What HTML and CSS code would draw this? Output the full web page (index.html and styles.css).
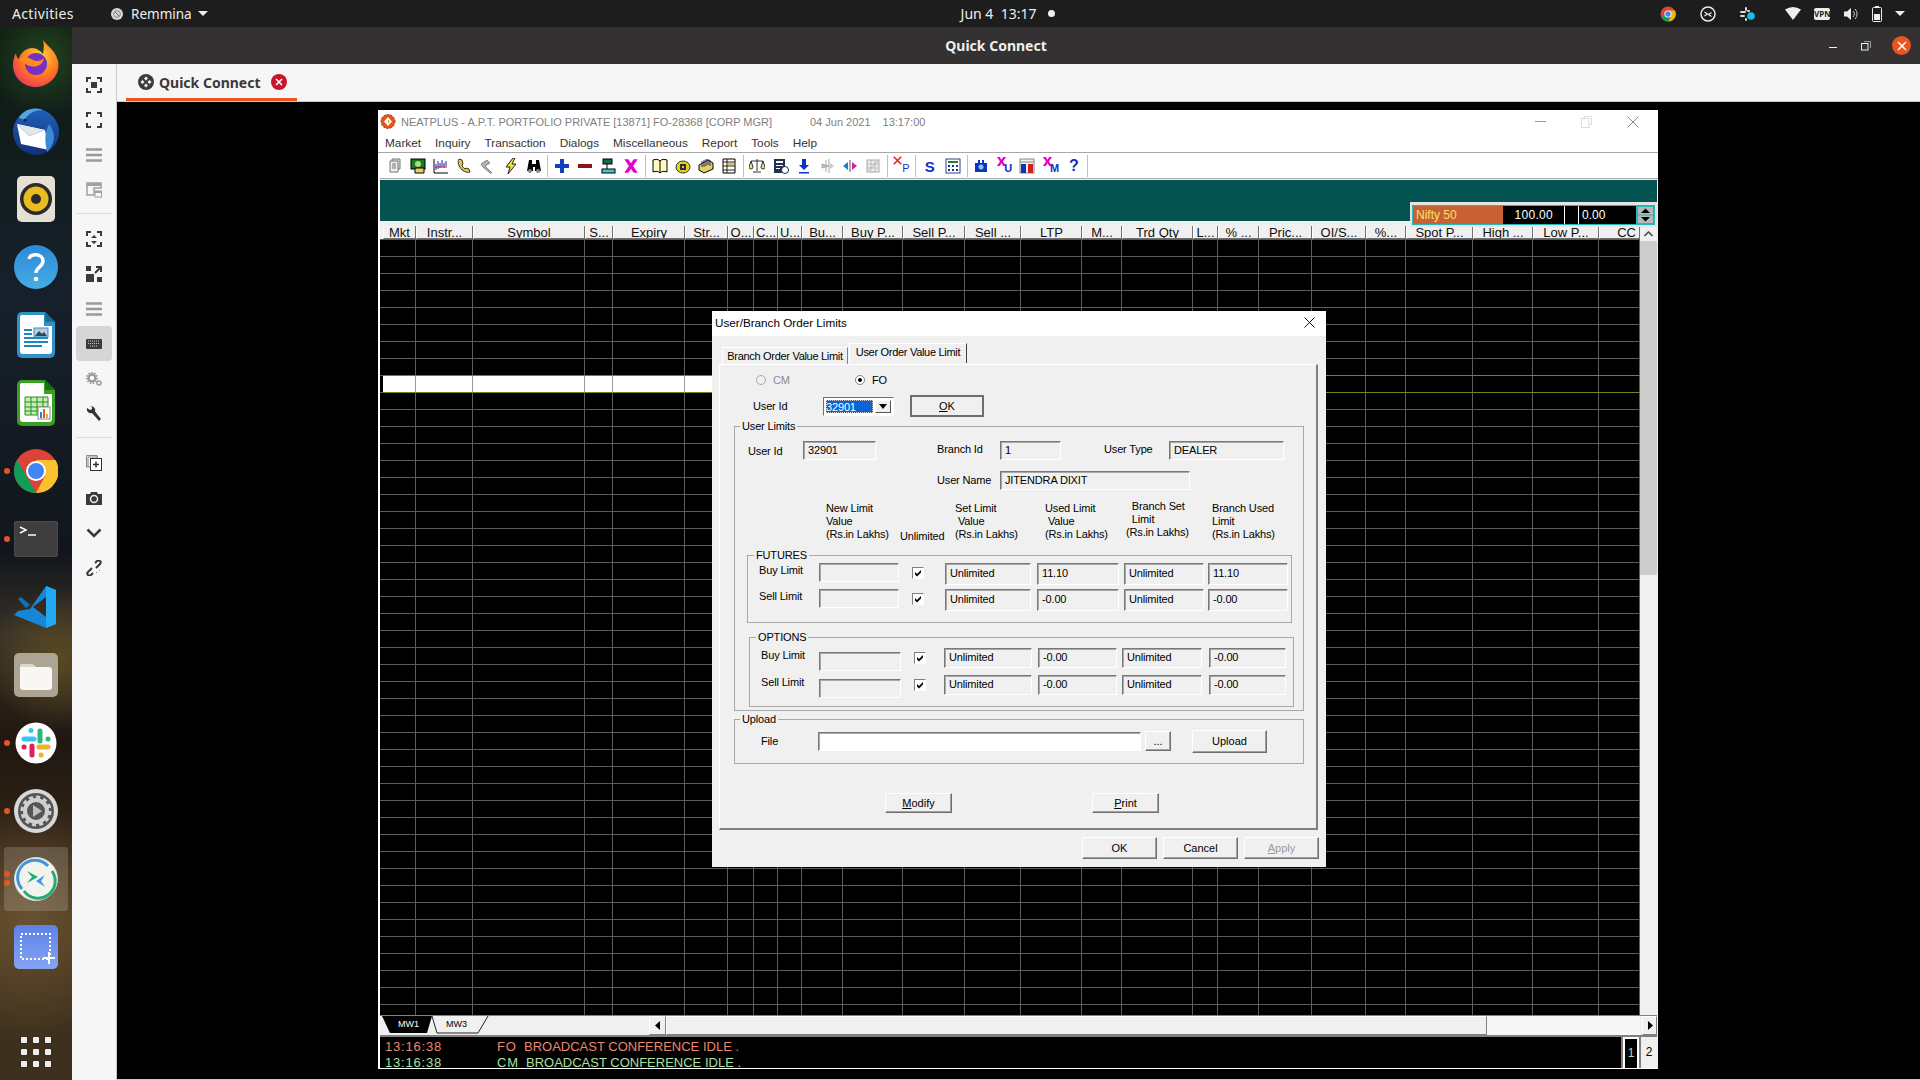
FILE: index.html
```html
<!DOCTYPE html>
<html lang="en">
<head>
    <meta charset="UTF-8">
    <title>Quick Connect</title>
    <link rel="stylesheet" href="styles.css">
</head>
<body>
    <svg class="defs" aria-hidden="true">
        <defs>
            <radialGradient id="ffBody" cx="0.6" cy="0.35" r="0.8">
                <stop offset="0" stop-color="#ffd23a"/><stop offset="0.5" stop-color="#ff7a1f"/><stop offset="1" stop-color="#e6246f"/>
            </radialGradient>
            <linearGradient id="tbBody" x1="0" y1="0" x2="0" y2="1">
                <stop offset="0" stop-color="#1f62b8"/><stop offset="1" stop-color="#142e78"/>
            </linearGradient>
            <linearGradient id="helpBody" x1="0" y1="0" x2="0" y2="1">
                <stop offset="0" stop-color="#2b8ad6"/><stop offset="1" stop-color="#47ace6"/>
            </linearGradient>
            <linearGradient id="shotBody" x1="0" y1="0" x2="0" y2="1">
                <stop offset="0" stop-color="#5a82e6"/><stop offset="1" stop-color="#86a4f4"/>
            </linearGradient>
            <symbol id="tick" viewBox="0 0 10 10"><path d="M2 4l2 2 4-4v2.4l-4 4-2-2z" fill="#000"/></symbol>
            <symbol id="markX" viewBox="0 0 12 12"><path d="M1 1h3l2 3 2-3h3L7.6 6 11 11H8L6 8l-2 3H1l3.4-5z" fill="#e800c8"/></symbol>
        </defs>
    </svg>

    <header class="topbar">
        <div class="top-left">
            <span class="activities">Activities</span>
            <svg class="app-glyph" width="14" height="14" viewBox="0 0 14 14"><circle cx="7" cy="7" r="6" fill="#d8d8d8"/><circle cx="7" cy="7" r="3.4" fill="none" stroke="#888" stroke-width="1"/><path d="M5 5l4 4" stroke="#666"/></svg>
            <span class="app-name">Remmina</span>
            <span class="caret"></span>
        </div>
        <div class="clock">Jun 4&nbsp;&nbsp;13:17<i class="clock-dot"></i></div>
        <div class="tray">
            <svg width="16" height="16" viewBox="0 0 16 16"><circle cx="8" cy="8" r="7.5" fill="#db4437"/><path d="M1.500 11.700A7.5 7.5 0 0 0 9 15.400L11 9 5 9z" fill="#0f9d58"/><path d="M8 4.500h7A7.5 7.5 0 0 1 8.600 15.500L11 9.500z" fill="#f4b400"/><circle cx="8" cy="8" r="3.6" fill="#fff"/><circle cx="8" cy="8" r="2.7" fill="#4285f4"/></svg>
            <svg class="tray-far" width="16" height="16" viewBox="0 0 16 16"><circle cx="8" cy="8" r="7" fill="none" stroke="#eee" stroke-width="1.5"/><path d="M4.500 6l3 2-3 2M11.500 6.500L8.500 8.500l3 2" fill="none" stroke="#eee" stroke-width="1.2"/></svg>
            <svg class="tray-far" width="16" height="16" viewBox="0 0 16 16"><g stroke="#ddd" stroke-width="2" stroke-linecap="round"><path d="M1 6h4M6 2v2M1 10h3M6 13v1M8 5h1"/></g><circle cx="11" cy="10" r="3.8" fill="#14c1ee"/></svg>
            <svg class="tray-wifi" width="16" height="13" viewBox="0 0 16 13"><path d="M0 2.500Q8-2.500 16 2.500L8 13z" fill="#eee"/></svg>
            <span class="vpn">VPN</span>
            <svg width="16" height="16" viewBox="0 0 16 16"><path d="M1 5.500h3L8 2v12L4 10.500H1z" fill="#eee"/><path d="M10 5a4 4 0 0 1 0 6M12 3a7 7 0 0 1 0 10" fill="none" stroke="#ccc"/></svg>
            <svg width="10" height="16" viewBox="0 0 10 16"><rect x="3" y="0" width="4" height="2" fill="#eee"/><rect x="0.500" y="1.500" width="9" height="14" rx="1" fill="none" stroke="#eee"/><rect x="2" y="8" width="6" height="6" fill="#eee"/></svg>
            <span class="caret"></span>
        </div>
    </header>

    <div class="desktop">
        <nav class="dock">
            <div class="dock-item">
                <svg width="46" height="48" viewBox="0 0 46 48"><path d="M30 0c2 6 12 10 15 22 3 14-9 26-22 26C10 48 0 38 0 26c0-4 1-9 3-12 0 3 1 5 3 6 1-6 7-11 13-11 4 0 9 3 11 6 1-5 1-11 0-15z" fill="url(#ffBody)"/><circle cx="23" cy="25" r="11" fill="#7a2fc4"/><path d="M6 20c5-3 10-2 14 1 4 2 8 1 11-2-1 7-8 10-14 8-4-1-7-4-11-7z" fill="#ff8a1f"/></svg>
            </div>
            <div class="dock-item">
                <svg width="50" height="50" viewBox="0 0 50 50"><circle cx="25" cy="26" r="23" fill="url(#tbBody)"/><path d="M8 12C12 4 22 0 32 4c-8 0-15 3-18 10z" fill="#4fa6ea"/><circle cx="14" cy="14" r="1.500" fill="#123"/><path d="M6 18l28 6 4 20-28-6z" fill="#fff"/><path d="M6 18l12 12 16-6" fill="#e2e6ee" stroke="#aab" stroke-width="0.500"/><path d="M38 18c6 8 8 18-2 28-2-9-3-19 2-28z" fill="#3b8ad8"/></svg>
            </div>
            <div class="dock-item">
                <svg width="38" height="46" viewBox="0 0 38 46"><rect width="38" height="46" rx="5" fill="#e6e0d4"/><circle cx="19" cy="23" r="16" fill="#2b2b2b"/><circle cx="19" cy="23" r="12.500" fill="#e9bd1f"/><circle cx="19" cy="23" r="5" fill="#2b2b2b"/></svg>
            </div>
            <div class="dock-item">
                <svg width="44" height="44" viewBox="0 0 44 44"><circle cx="22" cy="22" r="22" fill="url(#helpBody)"/><path d="M15 14c1-6 14-6 14 2 0 6-7 6-7 12" fill="none" stroke="#fff" stroke-width="3.500"/><circle cx="22" cy="34" r="2.300" fill="#fff"/></svg>
            </div>
            <div class="dock-item">
                <svg width="38" height="46" viewBox="0 0 38 46"><path d="M5 0h23l10 10v31a5 5 0 0 1-5 5H5a5 5 0 0 1-5-5V5a5 5 0 0 1 5-5z" fill="#2d93c8"/><path d="M5 3h22v11h8v25a3 3 0 0 1-3 3H6a3 3 0 0 1-3-3V5a2 2 0 0 1 2-2z" fill="#fff"/><path d="M28 0l10 10h-10z" fill="#1a6a96"/><path d="M7 17h8v2H7zm0 4h8v2H7zm0 4h24v2H7zm0 4h24v2H7zm0 4h18v2H7z" fill="#1f87bf"/><rect x="17" y="16" width="14" height="9" fill="#bcd" stroke="#2d93c8"/><path d="M18 24l4-5 3 3 2-2 3 4z" fill="#345"/></svg>
            </div>
            <div class="dock-item">
                <svg width="38" height="46" viewBox="0 0 38 46"><path d="M5 0h23l10 10v31a5 5 0 0 1-5 5H5a5 5 0 0 1-5-5V5a5 5 0 0 1 5-5z" fill="#3aa024"/><path d="M5 3h22v11h8v25a3 3 0 0 1-3 3H6a3 3 0 0 1-3-3V5a2 2 0 0 1 2-2z" fill="#fff"/><path d="M28 0l10 10h-10z" fill="#1c7010"/><path d="M8 17h23v18H8z" fill="#c3eeb4" stroke="#2e8c1c"/><path d="M8 22h23M8 27h23M8 31h23M14 17v18M20 17v18M26 17v18" stroke="#2e8c1c" fill="none"/><rect x="21" y="27" width="12" height="12" fill="#fff" stroke="#888"/><path d="M23 32h2v6h-2z" fill="#2a7fd0"/><path d="M26 29h2v9h-2z" fill="#e8601c"/><path d="M29 34h2v4h-2z" fill="#f0b020"/></svg>
            </div>
            <div class="dock-item">
                <i class="run-dot"></i>
                <svg width="44" height="44" viewBox="0 0 44 44"><circle cx="22" cy="22" r="22" fill="#db4437"/><path d="M3 11l10 17 9 16A22 22 0 0 1 3 11z" fill="#0f9d58"/><path d="M22 11h19.500A22 22 0 0 1 22 44l9-17z" fill="#fbc02d"/><circle cx="22" cy="22" r="10" fill="#fff"/><circle cx="22" cy="22" r="8" fill="#4285f4"/></svg>
            </div>
            <div class="dock-item">
                <i class="run-dot"></i>
                <svg width="44" height="36" viewBox="0 0 44 36"><rect width="44" height="36" rx="4" fill="#3e3e3e" stroke="#555"/><path d="M6 6l6 3-6 3" fill="none" stroke="#fff" stroke-width="1.500"/><path d="M14 14h8" stroke="#fff" stroke-width="1.500"/></svg>
            </div>
            <div class="dock-item">
                <svg width="44" height="42" viewBox="0 0 44 42"><path d="M32 0l10 4v34l-10 4L0 29l4-4 12-2L32 0z" fill="#1587d4"/><path d="M32 0l10 4v34l-10 4z" fill="#23a8f2"/><path d="M32 11L19 21l13 10z" fill="#3a2a1c"/><path d="M4 13l3-2 9 8-4 3z" fill="#0f70b8"/></svg>
            </div>
            <div class="dock-item">
                <svg width="44" height="44" viewBox="0 0 44 44"><rect width="44" height="44" rx="5" fill="#aca594"/><path d="M6 14c0-2 1-3 3-3h9l4 3h13c2 0 3 1 3 3v17c0 2-1 3-3 3H9c-2 0-3-1-3-3z" fill="#f8f7f3"/><path d="M6 14c0-2 1-3 3-3h9l4 3z" fill="#ddd8ca"/></svg>
            </div>
            <div class="dock-item">
                <i class="run-dot"></i>
                <svg width="42" height="42" viewBox="0 0 42 42"><circle cx="21" cy="21" r="20.500" fill="#fff"/><g stroke-width="5" stroke-linecap="round" fill="none"><path d="M9 17h10M16 8.500v.1" stroke="#36c5f0"/><path d="M25 9v10M33 17h.1" stroke="#2eb67d"/><path d="M24 25h9M26 33h.1" stroke="#ecb22e"/><path d="M17 24v9M9 25h.1" stroke="#e01e5a"/></g></svg>
            </div>
            <div class="dock-item">
                <i class="run-dot"></i>
                <svg width="44" height="44" viewBox="0 0 44 44"><circle cx="22" cy="22" r="22" fill="#d8d8d8"/><circle cx="22" cy="22" r="18" fill="#565656"/><circle cx="22" cy="22" r="11" fill="none" stroke="#d0d0d0" stroke-width="4"/><circle cx="22" cy="22" r="14" fill="none" stroke="#d0d0d0" stroke-width="3" stroke-dasharray="4 3.300"/><path d="M19 16l9 6-9 6z" fill="#c0c0c0"/></svg>
            </div>
            <div class="dock-item dock-active">
                <i class="run-dot run-top"></i><i class="run-dot run-low"></i>
                <svg width="44" height="44" viewBox="0 0 44 44"><circle cx="22" cy="22" r="21.500" fill="#f3f3ee" stroke="#d8d8d0"/><path d="M8 32A17 17 0 0 1 34 9" fill="none" stroke="#4094e0" stroke-width="3"/><path d="M38 14A17 17 0 0 1 10 34" fill="none" stroke="#23ac74" stroke-width="3"/><path d="M13 14l11 6-11 6 5-6z" fill="#23ac74"/><path d="M31 18l-9 6 9 6-4-6z" fill="#4094e0"/></svg>
            </div>
            <div class="dock-item">
                <svg width="44" height="44" viewBox="0 0 44 44"><rect width="44" height="44" rx="5" fill="url(#shotBody)"/><rect x="7" y="9" width="29" height="25" fill="none" stroke="#fff" stroke-width="2" stroke-dasharray="2 2"/><path d="M35 27v12M29 33h12" stroke="#fff" stroke-width="2"/></svg>
            </div>
            <div class="dock-apps">
                <i></i><i></i><i></i><i></i><i></i><i></i><i></i><i></i><i></i>
            </div>
        </nav>

        <main class="remmina">
            <div class="win-title">
                <span></span>
                <strong>Quick Connect</strong>
                <div class="win-ctrls">
                    <i class="ctrl-min"></i>
                    <svg width="10" height="10" viewBox="0 0 10 10"><rect x="0.500" y="2.500" width="6.500" height="6.500" fill="none" stroke="#eee"/><path d="M3 0.500h6.500V7" fill="none" stroke="#999"/></svg>
                    <span class="ctrl-close">
                        <svg width="10" height="10" viewBox="0 0 10 10"><path d="M1 1l8 8M9 1l-8 8" stroke="#fff" stroke-width="1.600"/></svg>
                    </span>
                </div>
            </div>
            <div class="rem-body">
                <aside class="side">
                    <div class="side-btn"><svg width="16" height="16" viewBox="0 0 16 16"><path d="M1 5V1h4M11 1h4v4M15 11v4h-4M5 15H1v-4" fill="none" stroke="#3a3a3a" stroke-width="2"/><rect x="5" y="5" width="6" height="6" fill="#3a3a3a"/></svg></div>
                    <div class="side-btn"><svg width="16" height="16" viewBox="0 0 16 16"><path d="M1 5V1h4M11 1h4v4M15 11v4h-4M5 15H1v-4" fill="none" stroke="#3a3a3a" stroke-width="2"/></svg></div>
                    <div class="side-btn"><svg width="16" height="14" viewBox="0 0 16 14"><path d="M0 1.500h16M0 7h16M0 12.500h16" stroke="#9a9a9a" stroke-width="2.500"/></svg></div>
                    <div class="side-btn"><svg width="16" height="16" viewBox="0 0 16 16"><path d="M1 1h14v5H8v7H1z" fill="none" stroke="#a0a0a0" stroke-width="1.500"/><rect x="1" y="1" width="14" height="3" fill="#a0a0a0"/><rect x="9" y="9" width="6.500" height="6" fill="none" stroke="#a0a0a0"/><rect x="9" y="9" width="6.500" height="2" fill="#a0a0a0"/></svg></div>
                    <div class="side-sep"></div>
                    <div class="side-btn"><svg width="16" height="16" viewBox="0 0 16 16"><path d="M1 5V1h4M11 1h4v4M15 11v4h-4M5 15H1v-4" fill="none" stroke="#3a3a3a" stroke-width="2"/><path d="M5 7l3-3 3 3zM5 10l3 3 3-3z" fill="#3a3a3a"/></svg></div>
                    <div class="side-btn"><svg width="16" height="16" viewBox="0 0 16 16"><path d="M0 8h8v8H0zM0 0h5v5H0z" fill="#3a3a3a"/><path d="M9 7l5-5M10 1h5v5" fill="none" stroke="#3a3a3a" stroke-width="2"/><path d="M11 11h5v5h-5z" fill="#3a3a3a"/></svg></div>
                    <div class="side-btn"><svg width="16" height="14" viewBox="0 0 16 14"><path d="M0 1.500h16M0 7h16M0 12.500h16" stroke="#9a9a9a" stroke-width="2.500"/></svg></div>
                    <div class="side-btn side-on"><svg width="16" height="10" viewBox="0 0 16 10"><rect width="16" height="10" rx="1" fill="#3a3a3a"/><path d="M2 2h12M2 4.500h12M4 7h8" stroke="#cfcfcf" stroke-dasharray="1 1"/></svg></div>
                    <div class="side-btn"><svg width="16" height="14" viewBox="0 0 16 14"><circle cx="6" cy="6" r="3.500" fill="none" stroke="#9a9a9a" stroke-width="2.500"/><circle cx="6" cy="6" r="5.400" fill="none" stroke="#9a9a9a" stroke-width="1.500" stroke-dasharray="1.500 1.500"/><circle cx="13" cy="11" r="2" fill="none" stroke="#9a9a9a" stroke-width="1.500"/></svg></div>
                    <div class="side-btn"><svg width="16" height="16" viewBox="0 0 16 16"><path d="M15 13l-2 2-7-8a4 4 0 0 1-5-5l3 2 2-1V1L4 .5a4 4 0 0 1 5 5z" fill="#333"/></svg></div>
                    <div class="side-sep"></div>
                    <div class="side-btn"><svg width="16" height="16" viewBox="0 0 16 16"><path d="M11 3V.5H.5V12H4" fill="none" stroke="#8a8a8a"/><path d="M13 3H3v10" fill="none" stroke="#8a8a8a" transform="translate(-1 -1)"/><rect x="4.500" y="3.500" width="11" height="12" fill="#fff" stroke="#333"/><path d="M10 6.500v6M7 9.500h6" stroke="#333" stroke-width="1.500"/></svg></div>
                    <div class="side-btn"><svg width="16" height="14" viewBox="0 0 16 14"><path d="M0 3h4l1-2h6l1 2h4v11H0z" fill="#3a3a3a"/><circle cx="8" cy="8" r="3.500" fill="none" stroke="#eee" stroke-width="1.500"/></svg></div>
                    <div class="side-btn"><svg width="16" height="10" viewBox="0 0 16 10"><path d="M1.500 1.500L8 8l6.500-6.500" fill="none" stroke="#3a3a3a" stroke-width="2.500"/></svg></div>
                    <div class="side-btn"><svg width="16" height="16" viewBox="0 0 16 16"><path d="M6 8L2 12a2 2 0 0 0 3 3l2-2M10 8l4-4a2 2 0 0 0-3-3L9 3" fill="none" stroke="#3a3a3a" stroke-width="2"/><path d="M10 12l1 1M13 10l1 1" stroke="#8a8a8a"/></svg></div>
                </aside>

                <section class="rem-main">
                    <div class="rem-tabs">
                        <div class="rem-tab">
                            <svg width="16" height="16" viewBox="0 0 16 16"><circle cx="8" cy="8" r="8" fill="#3c3c3c"/><path d="M8 2.500l2 2-2 2-2-2zM8 9.500l2 2-2 2-2-2zM2.500 8l2-2 2 2-2 2zM9.500 8l2-2 2 2-2 2z" fill="#f6f6f6"/></svg>
                            <span>Quick Connect</span>
                            <span class="tab-close"><svg width="8" height="8" viewBox="0 0 8 8"><path d="M1 1l6 6M7 1L1 7" stroke="#fff" stroke-width="1.600"/></svg></span>
                        </div>
                    </div>

                    <div class="remote">
                        <!-- remote NEATPLUS window -->
                        <div class="app-win">
                            <div class="app-title">
                                <svg class="app-logo" width="16" height="15" viewBox="0 0 16 15"><circle cx="8" cy="7.500" r="7" fill="#e0561c"/><circle cx="8" cy="7.500" r="7" fill="none" stroke="#a83010" stroke-dasharray="2 1.500"/><path d="M8 3l4 4.500L8 12 4 7.500z" fill="#fff"/><path d="M8 5.500l2 2-2 2z" fill="#e8a020"/></svg>
                                <span class="app-name-txt">NEATPLUS - A.P.T. PORTFOLIO PRIVATE [13871] FO-28368 [CORP MGR]</span>
                                <span class="app-date">04 Jun 2021</span>
                                <span class="app-time">13:17:00</span>
                                <div class="app-ctrls">
                                    <i class="app-min"></i>
                                    <svg width="11" height="12" viewBox="0 0 11 12"><path d="M3 2.500V.5h7.500v8H8" fill="none" stroke="#ddd"/><rect x="0.500" y="2.500" width="7.500" height="9" fill="none" stroke="#ddd"/></svg>
                                    <svg width="12" height="12" viewBox="0 0 12 12"><path d="M.5.500l11 11M11.500.500l-11 11" stroke="#888"/></svg>
                                </div>
                            </div>
                            <div class="app-menu">
                                <span>Market</span><span>Inquiry</span><span>Transaction</span><span>Dialogs</span><span>Miscellaneous</span><span>Report</span><span>Tools</span><span>Help</span>
                            </div>
                            <div class="app-tools">
                                <div class="tool-grip"></div>
                                <div class="tool"><svg width="16" height="16" viewBox="0 0 16 16"><path d="M5 1h8v10H5z" fill="#ddd" stroke="#777"/><path d="M3 3h8v11H3z" fill="#eee" stroke="#777"/><path d="M5 6h4M5 8h4M5 10h4" stroke="#777"/></svg></div>
                                <div class="tool"><svg width="16" height="16" viewBox="0 0 16 16"><rect x="1" y="1" width="14" height="10" fill="#207a20" stroke="#000"/><circle cx="8" cy="6" r="3" fill="#a0e080"/><path d="M5 10h9v5H5z" fill="#e6d060" stroke="#000"/></svg></div>
                                <div class="tool"><svg width="16" height="16" viewBox="0 0 16 16"><path d="M1 1v14h14" fill="none" stroke="#000"/><path d="M3 12V6M5 11V3M7 10V5M9 9V2M11 10V5M13 8V3" stroke="#1020c0"/><path d="M2 9h12" stroke="#d02020"/></svg></div>
                                <div class="tool"><svg width="16" height="16" viewBox="0 0 16 16"><path d="M3 1c-2 3 0 8 3 11 3 2 6 3 8 2l-1-3-3-1-1 1c-2-1-3-3-3-4l1-1-1-4z" fill="#e8c840" stroke="#333"/></svg></div>
                                <div class="tool"><svg width="16" height="16" viewBox="0 0 16 16"><path d="M2 6l6-4 3 3-5 3 7 7-2 0-7-6z" fill="#b0b0b0" stroke="#888"/></svg></div>
                                <div class="tool"><svg width="16" height="16" viewBox="0 0 16 16"><path d="M10 0L3 9h4l-2 7 8-10H9l3-6z" fill="#f0e040" stroke="#222"/></svg></div>
                                <div class="tool"><svg width="16" height="16" viewBox="0 0 16 16"><path d="M3 2h3v4h4V2h3l2 11H9V9H7v4H1z" fill="#000"/><circle cx="4" cy="13" r="2" fill="#888"/><circle cx="12" cy="13" r="2" fill="#888"/></svg></div>
                                <i class="tool-sep"></i>
                                <div class="tool"><svg width="16" height="16" viewBox="0 0 16 16"><path d="M6 1h4v5h5v4h-5v5H6v-5H1V6h5z" fill="#1040c0"/></svg></div>
                                <div class="tool"><svg width="16" height="16" viewBox="0 0 16 16"><rect x="1" y="6" width="14" height="4" fill="#901020"/></svg></div>
                                <div class="tool"><svg width="16" height="16" viewBox="0 0 16 16"><rect x="3" y="1" width="9" height="5" fill="#107040" stroke="#000"/><path d="M7 6v5" stroke="#000"/><rect x="2" y="11" width="13" height="4" fill="#40c8d0" stroke="#000"/></svg></div>
                                <div class="tool"><svg width="16" height="16" viewBox="0 0 16 16"><use href="#markX"/></svg></div>
                                <i class="tool-sep"></i>
                                <div class="tool"><svg width="16" height="16" viewBox="0 0 16 16"><path d="M1 2c3-1 5-1 7 1 2-2 4-2 7-1v12c-3-1-5-1-7 1-2-2-4-2-7-1z" fill="#fff8c0" stroke="#000"/><path d="M8 3v12" stroke="#000"/></svg></div>
                                <div class="tool"><svg width="16" height="16" viewBox="0 0 16 16"><ellipse cx="8" cy="9" rx="7" ry="6" fill="#e8d020" stroke="#333"/><path d="M5 6h6v6H5z" fill="#303030"/><path d="M7 8h2v2H7z" fill="#e8d020"/></svg></div>
                                <div class="tool"><svg width="16" height="16" viewBox="0 0 16 16"><path d="M1 7l9-5 5 3v6l-9 4-5-3z" fill="#e8d060" stroke="#000"/><path d="M4 3v6M6 2v7M8 1v7M10 1v6M12 2v6" stroke="#226"/></svg></div>
                                <div class="tool"><svg width="16" height="16" viewBox="0 0 16 16"><path d="M2 1h12v14H2z" fill="#fff" stroke="#000"/><path d="M2 4h12M2 8h12M2 12h12M6 1v14" stroke="#222"/><path d="M7 5h6v2H7z" fill="#e8c040"/></svg></div>
                                <i class="tool-sep"></i>
                                <div class="tool"><svg width="16" height="16" viewBox="0 0 16 16"><path d="M8 1v12M4 14h8M2 3h12" stroke="#333"/><path d="M0 9l2-6 2 6a2 2 0 0 1-4 0zM12 9l2-6 2 6a2 2 0 0 1-4 0z" fill="#f0e080" stroke="#333"/></svg></div>
                                <div class="tool"><svg width="16" height="16" viewBox="0 0 16 16"><path d="M1 1h11v14H1z" fill="#203050"/><path d="M3 3h7v2H3zM3 7h7v1H3zM3 10h4v1H3z" fill="#fff"/><circle cx="12" cy="12" r="3.500" fill="#fff" stroke="#203050"/></svg></div>
                                <div class="tool"><svg width="16" height="16" viewBox="0 0 16 16"><path d="M6 1h4v6h3l-5 5-5-5h3zM3 14h10v1.500H3z" fill="#1030c0"/></svg></div>
                                <div class="tool"><svg width="16" height="16" viewBox="0 0 16 16"><path d="M10 1v14M7 2v12M3 6l7 2-7 2z" stroke="#aaa" fill="#c0c0c0"/><path d="M11 5l4 3-4 3z" fill="#c8c8c8"/></svg></div>
                                <div class="tool"><svg width="16" height="16" viewBox="0 0 16 16"><path d="M8 2v12" stroke="#555"/><path d="M6 4L1 8l5 4z" fill="#1080d0"/><path d="M10 4l5 4-5 4z" fill="#d020a0"/></svg></div>
                                <div class="tool"><svg width="16" height="16" viewBox="0 0 16 16"><rect x="2" y="2" width="12" height="12" fill="#eee" stroke="#aaa"/><path d="M2 6h12M2 10h12M6 2v12M10 2v12M3 13L13 3" stroke="#bbb"/></svg></div>
                                <i class="tool-sep"></i>
                                <div class="tool tool-x"><svg width="9" height="9" viewBox="0 0 12 12"><path d="M1 1l10 10M11 1L1 11" stroke="#e02020" stroke-width="2"/></svg><b class="tool-p">P</b></div>
                                <i class="tool-sep"></i>
                                <div class="tool"><span class="tool-s">S</span></div>
                                <div class="tool"><svg width="16" height="16" viewBox="0 0 16 16"><rect x="1" y="1" width="14" height="14" fill="#fff" stroke="#304080"/><rect x="3" y="3" width="10" height="2" fill="#1a8040"/><path d="M3 7h2v2H3zM7 7h2v2H7zM11 7h2v2h-2zM3 11h2v2H3zM7 11h2v2H7zM11 11h2v2h-2z" fill="#203090"/></svg></div>
                                <i class="tool-sep"></i>
                                <div class="tool"><svg width="16" height="16" viewBox="0 0 16 16"><path d="M2 5h12v9H2z" fill="#1030c0"/><path d="M5 2h2v3H5zM9 2h2v3H9z" fill="#1030c0"/><circle cx="8" cy="9" r="2.500" fill="#80c8f0"/></svg></div>
                                <div class="tool tool-x"><svg width="11" height="11"><use href="#markX"/></svg><b class="tool-p tool-u">U</b></div>
                                <div class="tool"><svg width="16" height="16" viewBox="0 0 16 16"><rect x="1" y="1" width="14" height="14" fill="#eee" stroke="#888"/><path d="M1 4h14" stroke="#888"/><rect x="2" y="6" width="5" height="9" fill="#1030c0"/><rect x="9" y="6" width="5" height="9" fill="#d02020"/></svg></div>
                                <div class="tool tool-x"><svg width="11" height="11"><use href="#markX"/></svg><b class="tool-p tool-u">M</b></div>
                                <div class="tool"><span class="tool-s tool-q">?</span></div>
                                <i class="tool-sep"></i>
                            </div>

                            <div class="app-main">
                                <div class="teal">
                                    <div class="index-box">
                                        <div class="index-in">
                                            <span class="idx-name">Nifty 50</span>
                                            <span class="idx-val">100.00</span>
                                            <span class="idx-gap"></span>
                                            <span class="idx-chg">0.00</span>
                                            <span class="idx-spin">
                                                <svg width="15" height="16" viewBox="0 0 15 16"><rect width="15" height="7.500" fill="#b8b8b8"/><rect y="8.500" width="15" height="7.500" fill="#b8b8b8"/><path d="M3 6l4.500-4.500L12 6zM3 10l4.500 4.500L12 10z" fill="#000"/></svg>
                                            </span>
                                        </div>
                                    </div>
                                </div>
                                <div class="mw">
                                    <div class="mw-grid">
                                        <div class="cols mw-head">
                                            <span>Mkt</span><span>Instr...</span><span>Symbol</span><span>S...</span><span>Expiry</span><span>Str...</span><span>O...</span><span>C...</span><span>U...</span><span>Bu...</span><span>Buy P...</span><span>Sell P...</span><span>Sell ...</span><span>LTP</span><span>M...</span><span>Trd Qty</span><span>L...</span><span>% ...</span><span>Pric...</span><span>OI/S...</span><span>%...</span><span>Spot P...</span><span>High ...</span><span>Low P...</span><span class="th-right">CC</span>
                                        </div>
                                        <div class="cols mw-body">
                                            <i></i><i></i><i></i><i></i><i></i><i></i><i></i><i></i><i></i><i></i><i></i><i></i><i></i><i></i><i></i><i></i><i></i><i></i><i></i><i></i><i></i><i></i><i></i><i></i><i></i>
                                            <div class="cols sel-row">
                                                <b></b><b></b><b></b><b></b><b></b><b></b>
                                            </div>
                                        </div>
                                    </div>
                                    <div class="vscroll">
                                        <div class="vs-btn"><svg width="9" height="6" viewBox="0 0 9 6"><path d="M.5 5l4-4 4 4" fill="none" stroke="#505050" stroke-width="1.600"/></svg></div>
                                        <div class="vs-thumb"></div>
                                    </div>
                                </div>
                                <div class="sheet-bar">
                                    <svg class="sheets" width="267" height="18" viewBox="0 0 267 18">
                                        <path d="M0 0h50l-5 17H8z" fill="#000"/>
                                        <path d="M50 0l5 17h41l10-17" fill="none" stroke="#222"/>
                                        <text x="16" y="11" class="sheet-on">MW1</text>
                                        <text x="64" y="11" class="sheet-off">MW3</text>
                                    </svg>
                                    <div class="hs-btn"><svg width="6" height="9" viewBox="0 0 6 9"><path d="M5 0v9L0 4.500z" fill="#000"/></svg></div>
                                    <div class="hs-thumb"></div>
                                    <div class="hs-track"></div>
                                    <div class="hs-btn hs-end"><svg width="6" height="9" viewBox="0 0 6 9"><path d="M1 0v9l5-4.500z" fill="#000"/></svg></div>
                                </div>
                                <div class="msgs">
                                    <div class="msg-lines">
                                        <div class="msg-fo"><span class="msg-time">13:16:38</span><span class="msg-code">FO</span>BROADCAST CONFERENCE IDLE .</div>
                                        <div class="msg-cm"><span class="msg-time">13:16:38</span><span class="msg-code msg-code-cm">CM</span>BROADCAST CONFERENCE IDLE .</div>
                                    </div>
                                    <span class="msg-tab msg-tab-on">1</span>
                                    <span class="msg-tab">2</span>
                                </div>
                            </div>
                        </div>

                        <!-- limits dialog -->
                        <div class="dlg">
                            <div class="dlg-title">
                                <span>User/Branch Order Limits</span>
                                <svg width="11" height="11" viewBox="0 0 11 11"><path d="M.5.500l10 10M10.500.500l-10 10" stroke="#111"/></svg>
                            </div>
                            <div class="dlg-tabs">
                                <span class="dtab">Branch Order Value Limit</span>
                                <span class="dtab dtab-on">User Order Value Limit</span>
                            </div>
                            <div class="dlg-page">
                                <div class="market-row">
                                    <span class="radio radio-off"></span><span class="radio-lbl off-lbl">CM</span>
                                    <span class="radio radio-on"></span><span class="radio-lbl">FO</span>
                                </div>
                                <div class="user-row">
                                    <label class="user-lbl">User Id</label>
                                    <div class="combo"><span class="combo-val">32901</span><span class="combo-btn"><svg width="8" height="5" viewBox="0 0 8 5"><path d="M0 0h8L4 5z" fill="#000"/></svg></span></div>
                                    <button class="btn btn-def"><u>O</u>K</button>
                                </div>

                                <fieldset class="grp grp-user">
                                    <legend>User Limits</legend>
                                    <div class="id-row">
                                        <span class="lbl-uid">User Id</span>
                                        <div class="field fld-uid">32901</div>
                                        <span class="lbl-bid">Branch Id</span>
                                        <div class="field fld-bid">1</div>
                                        <span class="lbl-type">User Type</span>
                                        <div class="field fld-type">DEALER</div>
                                    </div>
                                    <div class="name-row">
                                        <span class="lbl-bid">User Name</span>
                                        <div class="field fld-name">JITENDRA DIXIT</div>
                                    </div>
                                    <div class="heads">
                                        <div class="hd hd-new">New Limit<br>Value<br>(Rs.in Lakhs)</div>
                                        <div class="hd hd-unl">Unlimited</div>
                                        <div class="hd hd-set">Set Limit<br>&nbsp;Value<br>(Rs.in Lakhs)</div>
                                        <div class="hd hd-used">Used Limit<br>&nbsp;Value<br>(Rs.in Lakhs)</div>
                                        <div class="hd hd-bset">&nbsp;&nbsp;Branch Set<br>&nbsp;&nbsp;Limit<br>(Rs.in Lakhs)</div>
                                        <div class="hd hd-bused">Branch Used<br>Limit<br>(Rs.in Lakhs)</div>
                                    </div>

                                    <fieldset class="grp grp-fut">
                                        <legend>FUTURES</legend>
                                        <div class="lim-row">
                                            <span class="lim-lbl">Buy Limit</span>
                                            <div class="field lim-new"></div>
                                            <span class="chk"><svg width="10" height="10"><use href="#tick"/></svg></span>
                                            <div class="field">Unlimited</div>
                                            <div class="field">11.10</div>
                                            <div class="field">Unlimited</div>
                                            <div class="field">11.10</div>
                                        </div>
                                        <div class="lim-row">
                                            <span class="lim-lbl">Sell Limit</span>
                                            <div class="field lim-new"></div>
                                            <span class="chk"><svg width="10" height="10"><use href="#tick"/></svg></span>
                                            <div class="field">Unlimited</div>
                                            <div class="field">-0.00</div>
                                            <div class="field">Unlimited</div>
                                            <div class="field">-0.00</div>
                                        </div>
                                    </fieldset>

                                    <fieldset class="grp grp-opt">
                                        <legend>OPTIONS</legend>
                                        <div class="lim-row">
                                            <span class="lim-lbl">Buy Limit</span>
                                            <div class="field lim-new"></div>
                                            <span class="chk"><svg width="10" height="10"><use href="#tick"/></svg></span>
                                            <div class="field">Unlimited</div>
                                            <div class="field">-0.00</div>
                                            <div class="field">Unlimited</div>
                                            <div class="field">-0.00</div>
                                        </div>
                                        <div class="lim-row">
                                            <span class="lim-lbl">Sell Limit</span>
                                            <div class="field lim-new"></div>
                                            <span class="chk"><svg width="10" height="10"><use href="#tick"/></svg></span>
                                            <div class="field">Unlimited</div>
                                            <div class="field">-0.00</div>
                                            <div class="field">Unlimited</div>
                                            <div class="field">-0.00</div>
                                        </div>
                                    </fieldset>
                                </fieldset>

                                <fieldset class="grp grp-up">
                                    <legend>Upload</legend>
                                    <div class="up-row">
                                        <span class="up-lbl">File</span>
                                        <div class="field up-file"></div>
                                        <button class="btn up-dots">...</button>
                                        <button class="btn up-send">Upload</button>
                                    </div>
                                </fieldset>

                                <div class="act-row">
                                    <button class="btn act-btn"><u>M</u>odify</button>
                                    <button class="btn act-btn"><u>P</u>rint</button>
                                </div>
                            </div>
                            <div class="dlg-foot">
                                <button class="btn foot-btn">OK</button>
                                <button class="btn foot-btn">Cancel</button>
                                <button class="btn foot-btn btn-dis"><u>A</u>pply</button>
                            </div>
                        </div>
                    </div>
                </section>
            </div>
        </main>
    </div>
</body>
</html>
```

FILE: styles.css
```css
body {
    margin: 0;
    width: 1920px;
    height: 1080px;
    overflow: hidden;
    background-color: #000000;
    font-family: "Liberation Sans", Arial, sans-serif;
}

.defs {
    position: absolute;
    width: 0;
    height: 0;
}

/* gnome top bar */
.topbar {
    height: 27px;
    background-color: #1d1d1d;
    color: #eeeeee;
    font-family: "Noto Sans", sans-serif;
    font-size: 14px;
    display: grid;
    grid-template-columns: 1fr auto 1fr;
    align-items: center;
}

.top-left {
    display: flex;
    align-items: center;
    padding-left: 12px;
}

.activities {
    width: 98px;
    letter-spacing: 0.35px;
}

.app-glyph {
    margin-right: 7px;
}

.app-name {
    margin-right: 6px;
    font-size: 13.5px;
}

.caret {
    width: 0;
    height: 0;
    border-left: 5px solid transparent;
    border-right: 5px solid transparent;
    border-top: 5px solid #eeeeee;
}

.clock {
    display: flex;
    align-items: center;
    margin-left: 96px;
}

.clock-dot {
    width: 7px;
    height: 7px;
    margin-left: 12px;
    border-radius: 50%;
    background-color: #eeeeee;
}

.tray {
    display: flex;
    align-items: center;
    justify-content: flex-end;
    gap: 13px;
    padding-right: 15px;
}

.tray-far {
    margin-left: 11px;
}

.tray-wifi {
    margin-left: 16px;
}

.vpn {
    width: 16px;
    background-color: #eeeeee;
    color: #1d1d1d;
    font-size: 8px;
    font-weight: bold;
    line-height: 12px;
    border-radius: 2px;
    text-align: center;
}

.desktop {
    display: flex;
    height: 1053px;
}

/* launcher */
.dock {
    width: 72px;
    padding-top: 2px;
    box-sizing: border-box;
    background:
        radial-gradient(circle at 60% 3%, #24451f 0, transparent 60px),
        radial-gradient(circle at 80% 60%, #5a4a22 0, transparent 70px),
        radial-gradient(circle at 40% 85%, #6a5230 0, transparent 120px),
        linear-gradient(to bottom, #0d1a10 0, #16202b 25%, #12161c 50%, #3a3228 58%, #1f1710 68%, #40301c 85%, #3c2f1e 100%);
}

.dock-item {
    height: 68px;
    display: flex;
    align-items: center;
    justify-content: center;
    position: relative;
}

.dock-active {
    height: 64px;
    margin: 2px 4px;
    border-radius: 3px;
    background-color: rgba(255, 255, 255, 0.16);
}

.run-dot {
    position: absolute;
    left: 4px;
    top: 31px;
    width: 6px;
    height: 6px;
    border-radius: 50%;
    background-color: #e95420;
}

.run-top {
    left: 0;
    top: 24px;
}

.run-low {
    left: 0;
    top: 33px;
}

.dock-apps {
    display: grid;
    grid-template-columns: repeat(3, 6px);
    gap: 6px;
    justify-content: center;
    margin-top: 56px;
}

.dock-apps i {
    height: 6px;
    border-radius: 1px;
    background-color: #eeeeee;
}

/* remmina window */
.remmina {
    flex: 1;
    display: flex;
    flex-direction: column;
}

.win-title {
    height: 37px;
    background-color: #333132;
    color: #eeeeee;
    font-size: 14px;
    display: grid;
    grid-template-columns: 1fr auto 1fr;
    align-items: center;
}

.win-title strong {
    font-family: "Noto Sans", sans-serif;
}

.win-ctrls {
    display: flex;
    align-items: center;
    justify-content: flex-end;
    padding-right: 9px;
}

.ctrl-min {
    width: 8px;
    height: 1px;
    margin-right: 24px;
    margin-top: 4px;
    background-color: #eeeeee;
}

.ctrl-close {
    width: 19px;
    height: 19px;
    margin-left: 21px;
    border-radius: 50%;
    background-color: #e95420;
    display: flex;
    align-items: center;
    justify-content: center;
}

.rem-body {
    flex: 1;
    display: flex;
    min-height: 0;
}

.side {
    width: 44px;
    background-color: #f6f6f6;
    border-right: 1px solid #c9c9c9;
    padding-top: 3px;
}

.side-btn {
    height: 35px;
    display: flex;
    align-items: center;
    justify-content: center;
}

.side-on {
    margin: 0 4px;
    border-radius: 4px;
    background-color: #d6d6d6;
}

.side-sep {
    height: 1px;
    margin: 6px 4px 7px;
    background-color: #dddddd;
}

.rem-main {
    flex: 1;
    display: flex;
    flex-direction: column;
}

.rem-tabs {
    height: 37px;
    background-color: #f6f6f6;
    border-bottom: 1px solid #c9c9c9;
    padding-left: 9px;
    display: flex;
}

.rem-tab {
    width: 171px;
    box-sizing: border-box;
    padding-left: 12px;
    padding-top: 2px;
    display: flex;
    align-items: center;
    gap: 5px;
    border-bottom: 3px solid #e95420;
    color: #3a3a3a;
    font-family: "Noto Sans", sans-serif;
    font-size: 14px;
    font-weight: bold;
}

.tab-close {
    width: 16px;
    height: 16px;
    margin-left: 5px;
    border-radius: 50%;
    background-color: #c7162b;
    display: flex;
    align-items: center;
    justify-content: center;
}

.remote {
    flex: 1;
    position: relative;
    background-color: #000000;
    border-bottom: 1px solid #c9c9c9;
}

/* remote app */
.app-win {
    position: absolute;
    left: 261px;
    top: 8px;
    width: 1280px;
    height: 959px;
    background-color: #ffffff;
    display: flex;
    flex-direction: column;
}

.app-title {
    height: 23px;
    flex: none;
    display: flex;
    align-items: center;
    padding-left: 2px;
    color: #808080;
    font-size: 11px;
}

.app-logo {
    margin-right: 5px;
}

.app-name-txt {
    flex: none;
    width: 409px;
    white-space: nowrap;
}

.app-time {
    margin-left: 12px;
}

.app-ctrls {
    margin-left: auto;
    display: flex;
    align-items: center;
    gap: 35px;
    padding-right: 19px;
}

.app-min {
    width: 11px;
    height: 1px;
    background-color: #999999;
}

.app-menu {
    height: 20px;
    flex: none;
    box-sizing: border-box;
    border-bottom: 1px solid #a8a8a8;
    display: flex;
    align-items: center;
    gap: 14px;
    padding-left: 7px;
    color: #333333;
    font-size: 11.8px;
}

.app-tools {
    height: 25px;
    flex: none;
    box-sizing: border-box;
    padding-top: 1px;
    display: flex;
    align-items: center;
}

.tool-grip {
    width: 5px;
}

.tool {
    width: 23.2px;
    height: 20px;
    display: flex;
    align-items: center;
    justify-content: center;
}

.tool-sep {
    width: 1px;
    height: 22px;
    margin: 0 2px;
    background-color: #c0c0c0;
}

.tool-x {
    align-items: flex-start;
}

.tool-p {
    margin-top: 6px;
    color: #1030c0;
    font-size: 11px;
    font-weight: normal;
    line-height: 12px;
}

.tool-u {
    font-weight: bold;
    margin-left: -3px;
}

.tool-s {
    color: #1030c0;
    font-size: 15px;
    font-weight: bold;
}

.tool-q {
    font-size: 16px;
}

.app-main {
    flex: 1;
    display: flex;
    flex-direction: column;
    min-height: 0;
    margin-left: 2px;
    padding-right: 1px;
    background-color: #f0f0f0;
    border-top: 1px solid #a8a8a8;
}

.teal {
    height: 41px;
    flex: none;
    margin-top: 1px;
    margin-bottom: 5px;
    background-color: #045350;
    position: relative;
}

.index-box {
    position: absolute;
    right: 0;
    top: 22px;
    width: 247px;
    height: 25px;
    box-sizing: border-box;
    padding: 3px 2px;
    background-color: #e4e4e4;
}

.index-in {
    height: 18px;
    border: 1px solid #29b6b6;
    background-color: #000000;
    display: flex;
    color: #ffffff;
    font-size: 12px;
    line-height: 18px;
}

.idx-name {
    width: 90px;
    padding-left: 3px;
    box-sizing: border-box;
    background-color: #c86035;
    color: #f6e26a;
}

.idx-val {
    width: 62px;
    box-sizing: border-box;
    padding-right: 11px;
    text-align: right;
    border-right: 1px solid #ffffff;
    letter-spacing: 0.3px;
}

.idx-gap {
    width: 13px;
    border-right: 1px solid #ffffff;
}

.idx-chg {
    width: 57px;
    padding-left: 3px;
    box-sizing: border-box;
}

.idx-spin {
    flex: 1;
    display: flex;
    align-items: center;
    justify-content: center;
    background-color: #29b6b6;
}

.mw {
    flex: 1;
    display: flex;
    min-height: 0;
}

.mw-grid {
    width: 1260px;
    padding-left: 3px;
    box-sizing: border-box;
    display: flex;
    flex-direction: column;
}

.cols {
    display: grid;
    grid-template-columns: 33px 57px 112px 28px 72px 43px 26px 24px 24px 41px 60px 62px 56px 61px 40px 71px 25px 41px 53px 54px 40px 67px 60px 66px 41px;
}

.mw-head {
    height: 13px;
    flex: none;
    color: #111111;
    font-size: 13px;
    line-height: 13px;
    text-align: center;
    white-space: nowrap;
}

.mw-head span {
    overflow: hidden;
    box-sizing: border-box;
    background-color: #f0f0f0;
    border: 1px solid;
    border-top: 0;
    border-color: #ffffff #707070 #707070 #ffffff;
}

.mw-head .th-right {
    text-align: right;
    padding-right: 3px;
}

.mw-body {
    flex: 1;
    position: relative;
    margin-left: -3px;
    padding-left: 3px;
    background: repeating-linear-gradient(to bottom, #5c5c5c 0, #5c5c5c 1px, #000000 1px, #000000 17px);
}

.mw-body i {
    border-right: 1px solid #5c5c5c;
}

.sel-row {
    position: absolute;
    left: 3px;
    right: 0;
    top: 136px;
    height: 16px;
    border-top: 1px solid #6a8a20;
    border-bottom: 1px solid #6a8a20;
}

.sel-row b {
    background-color: #ffffff;
    border-right: 1px solid #9a9a9a;
}

.vscroll {
    flex: 1;
    display: flex;
    flex-direction: column;
}

.vs-btn {
    height: 15px;
    display: flex;
    align-items: center;
    justify-content: center;
}

.vs-thumb {
    height: 334px;
    background-color: #cdcdcd;
}

.sheet-bar {
    height: 19px;
    flex: none;
    border-top: 1px solid #808080;
    display: flex;
}

.sheets {
    flex: none;
    margin-left: 2px;
}

.sheet-on,
.sheet-off {
    font-size: 9px;
    font-family: "Liberation Sans", sans-serif;
}

.sheet-on {
    fill: #ffffff;
}

.hs-btn {
    width: 17px;
    box-sizing: border-box;
    display: flex;
    align-items: center;
    justify-content: center;
    border: 1px solid;
    border-color: #ffffff #808080 #808080 #ffffff;
}

.hs-end {
    margin-left: 2px;
    width: 15px;
}

.hs-thumb {
    width: 821px;
    box-sizing: border-box;
    background-color: #f0f0f0;
    border: 1px solid;
    border-color: #ffffff #808080 #808080 #ffffff;
}

.hs-track {
    flex: 1;
    background-color: #f7f7f7;
}

.msgs {
    height: 34px;
    flex: none;
    display: flex;
    box-sizing: border-box;
    border-top: 2px solid #808080;
    border-bottom: 1px solid #ffffff;
}

.msg-lines {
    flex: 1;
    padding: 2px 0 0 5px;
    background-color: #000000;
    border-right: 2px solid #808080;
    font-size: 13px;
    white-space: nowrap;
}

.msg-fo {
    color: #e8896e;
    line-height: 16px;
}

.msg-cm {
    color: #a8e0a0;
    line-height: 13px;
    margin-top: 1px;
}

.msg-time {
    display: inline-block;
    width: 112px;
    letter-spacing: 0.8px;
}

.msg-code {
    display: inline-block;
    width: 27px;
    letter-spacing: 0.8px;
}

.msg-code-cm {
    width: 29px;
}

.msg-tab {
    width: 18px;
    box-sizing: border-box;
    text-align: center;
    font-size: 12px;
    line-height: 31px;
    border-left: 2px solid #808080;
}

.msg-tab-on {
    width: 16px;
    border: 2px solid #ffffff;
    border-bottom: 0;
    background-color: #000000;
    color: #a8e0a0;
    line-height: 29px;
}

/* dialog */
.dlg {
    position: absolute;
    left: 595px;
    top: 209px;
    width: 614px;
    height: 556px;
    background-color: #f0f0f0;
    color: #000000;
    font-size: 11px;
    letter-spacing: -0.15px;
    display: flex;
    flex-direction: column;
}

.dlg-title {
    height: 23px;
    padding: 0 11px 2px 3px;
    flex: none;
    background-color: #ffffff;
    display: flex;
    align-items: center;
    justify-content: space-between;
    font-size: 11.7px;
    letter-spacing: 0;
}

.dlg-tabs {
    height: 28px;
    flex: none;
    box-sizing: border-box;
    padding: 4px 0 0 10px;
    display: flex;
    align-items: flex-end;
}

.dtab {
    height: 17px;
    width: 126px;
    line-height: 16px;
    text-align: center;
    border: 1px solid;
    border-bottom: 0;
    border-color: #ffffff #808080 #ffffff #ffffff;
    box-sizing: border-box;
    font-size: 11px;
    letter-spacing: -0.3px;
    white-space: nowrap;
}

.dtab-on {
    height: 20px;
    width: 118px;
    margin-left: 1px;
    margin-bottom: 1px;
    line-height: 16px;
    border-right-color: #404040;
}

.dlg-page {
    height: 466px;
    flex: none;
    margin: 0 8px 0 7px;
    box-sizing: border-box;
    border: 1px solid;
    border-color: #ffffff #808080 #808080 #ffffff;
    border-bottom-width: 2px;
    border-right-width: 2px;
    padding-left: 14px;
}

.market-row {
    height: 30px;
    display: flex;
    align-items: center;
}

.radio {
    width: 10px;
    height: 10px;
    border-radius: 50%;
    background-color: #ffffff;
    border: 1px solid #707070;
    box-sizing: border-box;
}

.radio-off {
    margin-left: 22px;
    background-color: #f0f0f0;
    border-color: #a8a8a8;
}

.radio-on {
    margin-left: 62px;
    border: 3px solid #ffffff;
    outline: 1px solid #808080;
    outline-offset: -1px;
    background-color: #000000;
}

.radio-lbl {
    margin-left: 7px;
}

.off-lbl {
    color: #8c8c8c;
    width: 20px;
}

.user-row {
    height: 22px;
    display: flex;
    align-items: center;
}

.user-lbl {
    width: 70px;
    margin-left: 19px;
}

.combo {
    width: 71px;
    height: 19px;
    box-sizing: border-box;
    display: flex;
    padding: 2px;
    background-color: #ffffff;
    border: 1px solid;
    border-color: #707070 #ffffff #ffffff #707070;
}

.combo-val {
    flex: 1;
    background-color: #0a64d8;
    color: #ffffff;
    line-height: 14px;
    outline: 1px dotted #d0d0d0;
    outline-offset: -1px;
}

.combo-btn {
    width: 16px;
    margin-left: 2px;
    display: flex;
    align-items: center;
    justify-content: center;
    background-color: #f0f0f0;
    border: 1px solid;
    border-color: #ffffff #555555 #555555 #ffffff;
    box-sizing: border-box;
}

.btn {
    margin: 0;
    padding: 0;
    height: 22px;
    background-color: #f0f0f0;
    color: #000000;
    font-family: inherit;
    font-size: 11px;
    border: 1px solid;
    border-color: #ffffff #707070 #707070 #ffffff;
    box-shadow: inset -1px -1px 0 #a0a0a0;
}

.btn-def {
    width: 74px;
    margin-left: 16px;
    border: 2px solid #6e6e6e;
    box-shadow: none;
}

.btn-dis {
    color: #9a9a9a;
}

.grp {
    margin: 0;
    padding: 0;
    min-width: 0;
    border: 1px solid #a8a8a8;
    box-sizing: border-box;
}

.grp legend {
    margin-left: 5px;
    padding: 0 2px;
    line-height: 13px;
}

.grp-user {
    width: 570px;
    height: 291px;
    margin-top: 3px;
    padding-left: 13px;
}

.grp-user > legend {
    margin-left: -8px;
}

.id-row {
    height: 20px;
    margin-top: 8px;
    display: flex;
    align-items: flex-start;
}

.name-row {
    display: flex;
    align-items: center;
    height: 20px;
    margin-top: 9px;
    margin-left: 189px;
}

.field {
    height: 19px;
    box-sizing: border-box;
    padding-left: 4px;
    line-height: 17px;
    background-color: #f0f0f0;
    border: 1px solid;
    border-color: #787878 #ffffff #ffffff #787878;
    box-shadow: inset 1px 1px 0 #a8a8a8;
    white-space: nowrap;
}

.lbl-uid {
    width: 55px;
    margin-top: 4px;
}

.lbl-bid {
    width: 63px;
    margin-top: 2px;
}

.name-row .lbl-bid {
    margin-top: 0;
}

.lbl-type {
    width: 65px;
    margin-top: 2px;
}

.fld-uid {
    width: 73px;
}

.fld-bid {
    width: 61px;
}

.fld-uid + .lbl-bid {
    margin-left: 61px;
}

.fld-bid + .lbl-type {
    margin-left: 43px;
}

.fld-type {
    width: 115px;
}

.fld-name {
    width: 190px;
}

.heads {
    display: flex;
    height: 47px;
    margin: 12px 0 0 78px;
    line-height: 13px;
    white-space: nowrap;
}

.hd-new {
    width: 74px;
}

.hd-unl {
    width: 55px;
    margin-top: 28px;
}

.hd-set {
    width: 90px;
}

.hd-used {
    width: 81px;
}

.hd-bset {
    width: 86px;
    margin-top: -2px;
}

/* futures and options rows: same cells, slightly different widths */
.grp-fut {
    width: 545px;
    height: 74px;
    margin: 0 0 0 -1px;
    padding: 1px 0 0 11px;
}

.grp-opt {
    width: 545px;
    height: 76px;
    margin: 8px 0 0 1px;
    padding: 4px 0 0 11px;
}

.grp-fut > legend,
.grp-opt > legend {
    margin-left: -5px;
}

.lim-row {
    display: grid;
    align-items: start;
    height: 22px;
    margin-bottom: 4px;
}

.grp-fut .lim-row {
    grid-template-columns: 60px 93px 33px 92px 87px 84px 80px;
}

.grp-opt .lim-row {
    grid-template-columns: 58px 95px 30px 94px 84px 87px 77px;
    margin-bottom: 5px;
}

.lim-row .field {
    height: 22px;
    line-height: 19px;
}

.lim-row .lim-new {
    height: 19px;
    width: 80px;
}

.grp-opt .lim-row .field {
    height: 20px;
    line-height: 17px;
}

.grp-opt .lim-row .lim-new {
    width: 82px;
    height: 19px;
    margin-top: 4px;
}

.grp-fut .lim-row > :nth-child(4) {
    width: 86px;
}

.grp-fut .lim-row > :nth-child(5) {
    width: 82px;
}

.grp-fut .lim-row > :nth-child(6),
.grp-fut .lim-row > :nth-child(7) {
    width: 80px;
}

.grp-opt .lim-row > :nth-child(4) {
    width: 88px;
}

.grp-opt .lim-row > :nth-child(5) {
    width: 79px;
}

.grp-opt .lim-row > :nth-child(6) {
    width: 80px;
}

.grp-opt .lim-row > :nth-child(7) {
    width: 77px;
}

.lim-lbl {
    margin-top: 1px;
}

.chk {
    width: 12px;
    height: 12px;
    margin-top: 4px;
    box-sizing: border-box;
    background-color: #ffffff;
    border: 1px solid;
    border-color: #808080 #ffffff #ffffff #808080;
    display: flex;
    align-items: center;
    justify-content: center;
}

.grp-opt .lim-lbl {
    margin-top: 1px;
}

.grp-opt .chk {
    margin-top: 4px;
}

.grp-up {
    width: 570px;
    height: 51px;
    margin-top: 2px;
}

.up-row {
    display: flex;
    align-items: center;
    height: 24px;
    margin-top: 3px;
}

.up-lbl {
    width: 57px;
    margin-left: 26px;
}

.up-file {
    width: 323px;
    height: 19px;
    background-color: #ffffff;
}

.up-dots {
    width: 26px;
    height: 20px;
    margin-left: 4px;
}

.up-send {
    width: 75px;
    height: 23px;
    margin-left: 21px;
}

.act-row {
    display: flex;
    gap: 140px;
    margin: 29px 0 0 151px;
}

.act-btn {
    width: 67px;
    height: 20px;
}

.dlg-foot {
    display: flex;
    gap: 6px;
    justify-content: flex-end;
    padding: 7px 7px 0 0;
}

.foot-btn {
    width: 75px;
    height: 22px;
}
```
